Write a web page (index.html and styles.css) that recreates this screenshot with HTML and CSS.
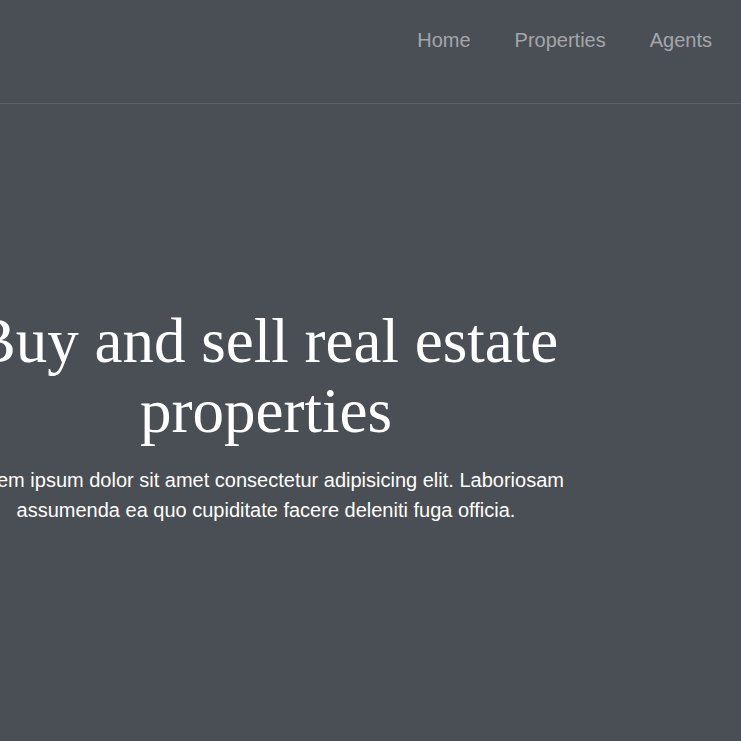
FILE: index.html
```html
<!DOCTYPE html>
<html lang="en">
<head>
<meta charset="utf-8">
<title>Real Estate</title>
<link rel="stylesheet" href="styles.css">
</head>
<body>
<header class="site-header">
  <nav class="main-nav">
    <a class="nav-link" href="#">Home</a>
    <a class="nav-link" href="#">Properties</a>
    <a class="nav-link" href="#">Agents</a>
  </nav>
</header>
<section class="hero">
  <div class="hero-content">
    <h1 class="hero-title">Buy and sell real estate properties</h1>
    <p class="hero-text">Lorem ipsum dolor sit amet consectetur adipisicing elit. Laboriosam assumenda ea quo cupiditate facere deleniti fuga officia.</p>
  </div>
</section>
</body>
</html>
```

FILE: styles.css
```css
html, body {
  margin: 0;
  padding: 0;
  height: 100%;
  overflow: hidden;
}
body {
  background: #4a4e55;
  font-family: "Liberation Sans", Arial, sans-serif;
  color: #fff;
}
.site-header {
  height: 103px;
  border-bottom: 1px solid rgba(255, 255, 255, 0.1);
  box-sizing: content-box;
}
.main-nav {
  display: flex;
  justify-content: flex-end;
  gap: 44px;
  padding: 28px 29px 0 0;
}
.nav-link {
  font-size: 20px;
  line-height: 24px;
  color: rgba(255, 255, 255, 0.5);
  text-decoration: none;
}
.hero {
  padding-top: 202px;
}
.hero-content {
  width: 640px;
  margin-left: -54px;
  text-align: center;
}
.hero-title {
  margin: 0;
  font-family: "Liberation Serif", "Times New Roman", serif;
  font-weight: normal;
  font-size: 63px;
  line-height: 70px;
}
.hero-text {
  margin: 19px 0 0;
  font-size: 20px;
  line-height: 30px;
}
```
